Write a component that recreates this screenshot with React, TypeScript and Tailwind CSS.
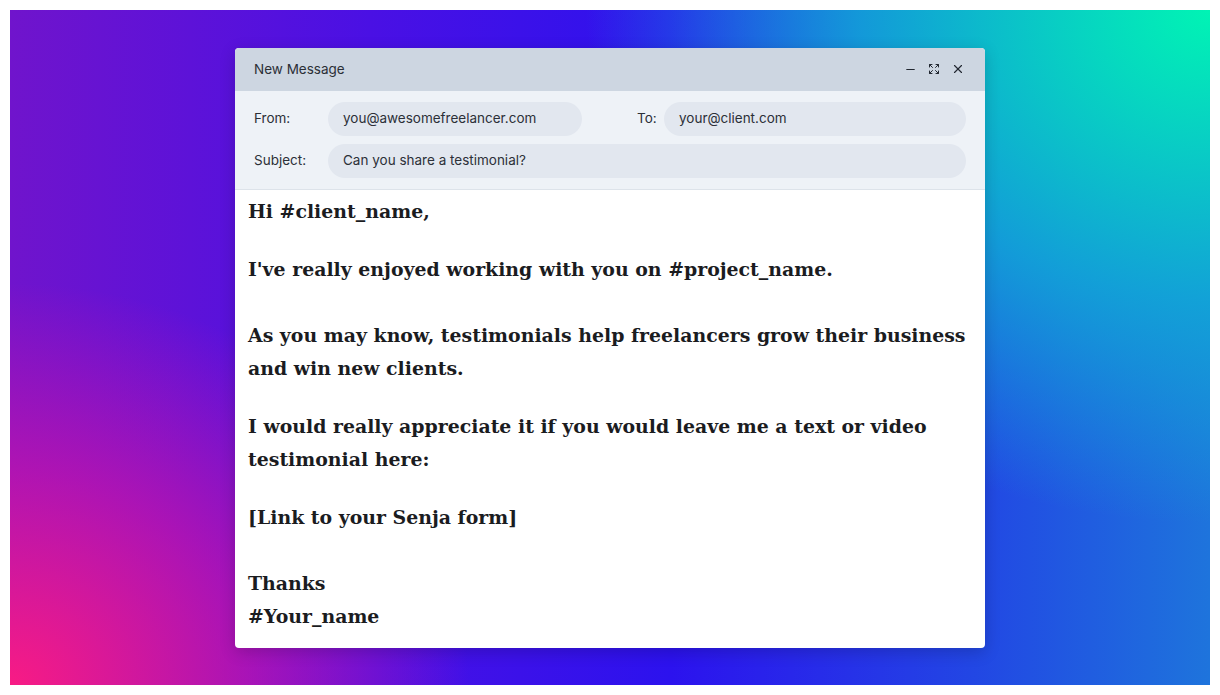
import React from 'react';
import { Minus, Expand, X } from 'lucide-react';

export default function App() {
  const body = [
    { text: 'Hi #client_name,', mt: '' },
    { text: "I've really enjoyed working with you on #project_name.", mt: 'mt-[25px]' },
    { text: 'As you may know, testimonials help freelancers grow their business', mt: 'mt-[33px]' },
    { text: 'and win new clients.', mt: '' },
    { text: 'I would really appreciate it if you would leave me a text or video', mt: 'mt-[25px]' },
    { text: 'testimonial here:', mt: '' },
    { text: '[Link to your Senja form]', mt: 'mt-[25px]' },
    { text: 'Thanks', mt: 'mt-[33px]' },
    { text: '#Your_name', mt: '' },
  ];

  return (
    <div className="w-[1220px] h-[695px] bg-white p-[10px]">
      <div className="w-full h-full flex items-center justify-center bg-[radial-gradient(ellipse_65%_95%_at_100%_0%,#00f4b4_0%,rgba(16,170,214,0.85)_45%,rgba(30,110,225,0)_80%),radial-gradient(ellipse_45%_70%_at_0%_100%,#f81b84_0%,rgba(220,20,160,0.6)_45%,rgba(150,16,200,0)_85%),linear-gradient(90deg,#7014cc_0%,#4a10e4_30%,#2c12ee_55%,#2246e4_80%,#1e74dc_100%)]">
        <div className="w-[750px] rounded-[4px] overflow-hidden bg-white shadow-[0_4px_16px_rgba(0,0,0,0.18)] font-['Inter',sans-serif]">
          {/* Title bar */}
          <div className="h-[43px] bg-[#cdd6e1] flex items-center justify-between pl-[19px] pr-[20px] text-[#2b2f36]">
            <span className="text-[13.5px]">New Message</span>
            <div className="flex items-center gap-[11px] text-[#222831]">
              <Minus className="w-[13px] h-[13px]" strokeWidth={2} />
              <Expand className="w-[12px] h-[12px]" strokeWidth={2} />
              <X className="w-[14px] h-[14px]" strokeWidth={2} />
            </div>
          </div>

          {/* Header fields */}
          <div className="bg-[#eef2f7] border-b border-[#dde3ea] pt-[11px] pb-[11px] pl-[19px] pr-[19px] flex flex-col gap-[8px] text-[13.5px] text-[#2c3038]">
            <div className="flex items-center">
              <span className="w-[74px]">From:</span>
              <div className="w-[254px] h-[34px] rounded-full bg-[#e2e7ef] flex items-center px-[15px]">you@awesomefreelancer.com</div>
              <span className="ml-[55px] w-[27px]">To:</span>
              <div className="flex-1 h-[34px] rounded-full bg-[#e2e7ef] flex items-center px-[15px]">your@client.com</div>
            </div>
            <div className="flex items-center">
              <span className="w-[74px]">Subject:</span>
              <div className="flex-1 h-[34px] rounded-full bg-[#e2e7ef] flex items-center px-[15px]">Can you share a testimonial?</div>
            </div>
          </div>

          {/* Body */}
          <div className="pl-[13px] pr-[10px] pt-[5px] pb-[15px] font-['DejaVu_Serif',serif] font-bold text-[18.9px] leading-[33px] text-[#1b1c1f]">
            {body.map((l, i) => (
              <p key={i} className={`${l.mt} whitespace-nowrap`}>{l.text}</p>
            ))}
          </div>
        </div>
      </div>
    </div>
  );
}
